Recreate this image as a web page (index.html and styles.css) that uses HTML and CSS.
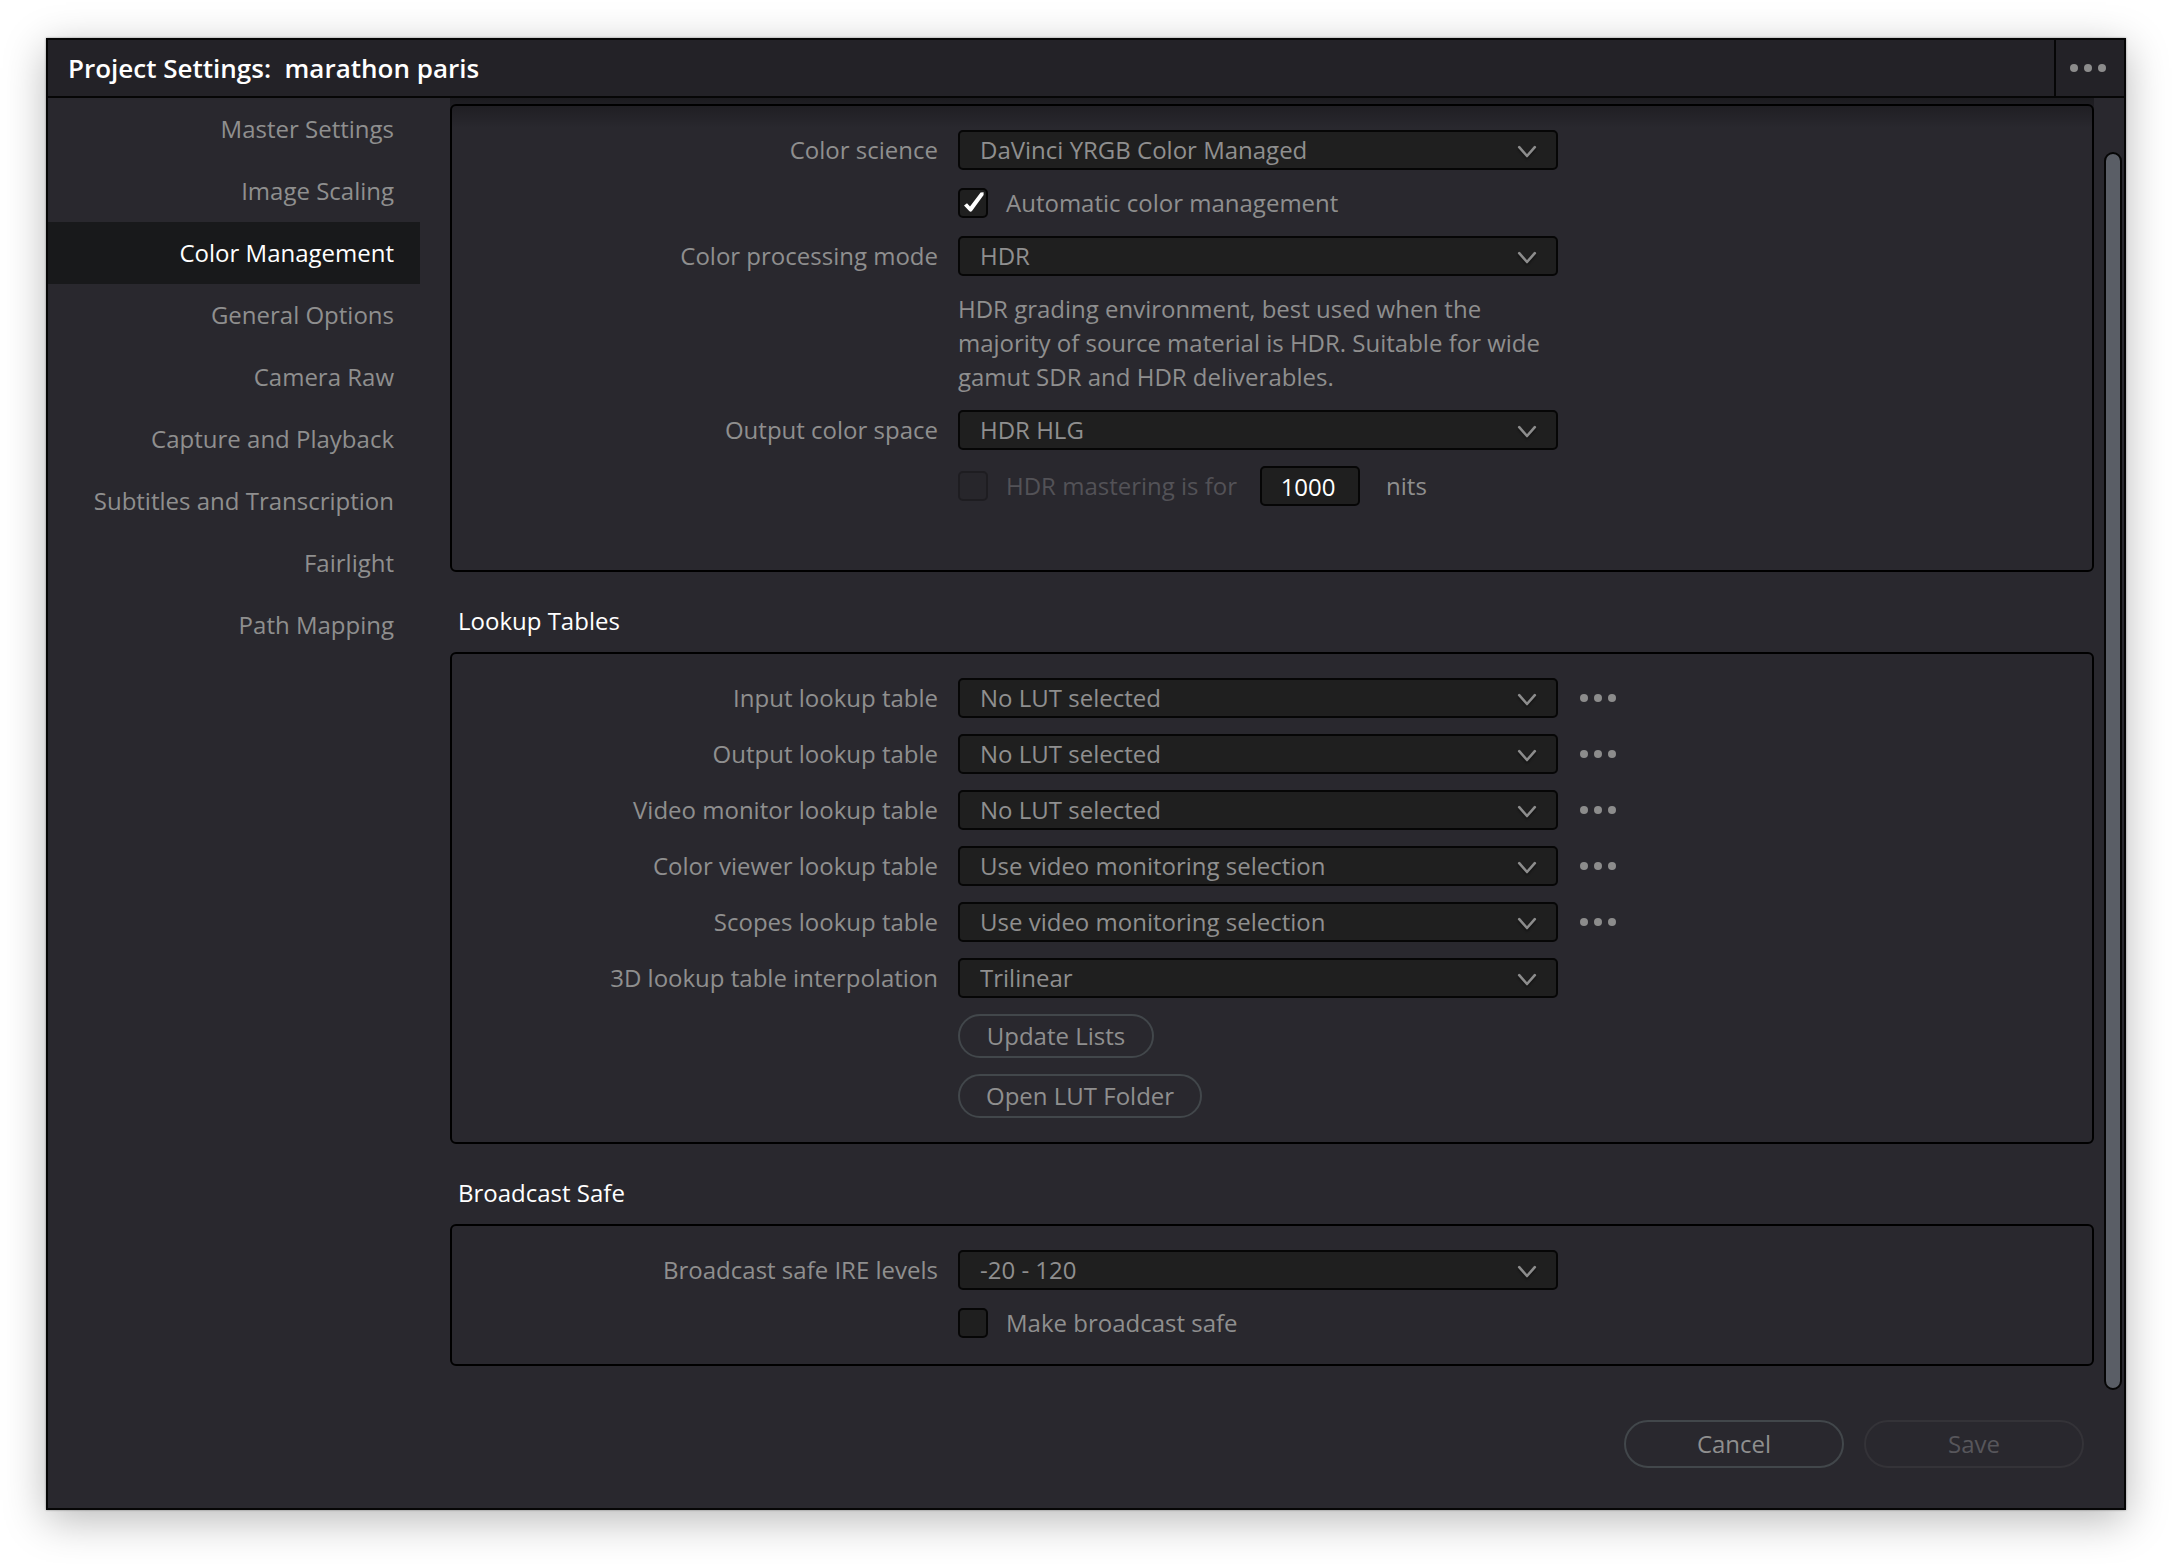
FILE: index.html
```html
<!DOCTYPE html>
<html lang="en">
<head>
    <meta charset="UTF-8">
    <meta name="viewport" content="width=device-width, initial-scale=1.0">
    <title>Project Settings</title>
    <link rel="stylesheet" href="styles.css">
</head>
<body>
    <!-- shared icons -->
    <svg class="sprite" aria-hidden="true">
        <symbol id="dots" viewBox="0 0 36 8">
            <circle cx="4" cy="4" r="4"/>
            <circle cx="18" cy="4" r="4"/>
            <circle cx="32" cy="4" r="4"/>
        </symbol>
        <symbol id="chevron" viewBox="0 0 20 14">
            <path d="M2.2 2.2 L10 11 L17.8 2.2" fill="none" stroke="currentColor" stroke-width="2.6" stroke-linecap="round" stroke-linejoin="round"/>
        </symbol>
        <symbol id="check" viewBox="0 0 30 30">
            <path d="M6 17.4 L9 15.2 L12 18.4 L22.6 4.6 L25.6 4.2 L25.6 7 L14 23 Q12.6 24.6 11.2 23 Z" fill="#fff"/>
        </symbol>
    </svg>

    <div class="window">
        <header class="titlebar">
            <h1>Project Settings:&nbsp; marathon paris</h1>
            <button class="titlebar-menu" aria-label="More options"><svg class="dots"><use href="#dots"/></svg></button>
        </header>

        <div class="main">
            <nav class="sidebar">
                <a href="#">Master Settings</a>
                <a href="#">Image Scaling</a>
                <a href="#" class="active">Color Management</a>
                <a href="#">General Options</a>
                <a href="#">Camera Raw</a>
                <a href="#">Capture and Playback</a>
                <a href="#">Subtitles and Transcription</a>
                <a href="#">Fairlight</a>
                <a href="#">Path Mapping</a>
            </nav>

            <div class="content">
                <section class="panel panel-color">
                    <div class="row">
                        <label class="name" for="science">Color science</label>
                        <div class="select">
                            <select id="science"><option>DaVinci YRGB Color Managed</option></select>
                            <svg class="chevron"><use href="#chevron"/></svg>
                        </div>
                    </div>
                    <div class="row row-check">
                        <label class="check">
                            <span class="box"><input type="checkbox" checked><svg><use href="#check"/></svg></span>
                            Automatic color management
                        </label>
                    </div>
                    <div class="row">
                        <label class="name" for="mode">Color processing mode</label>
                        <div class="select">
                            <select id="mode"><option>HDR</option></select>
                            <svg class="chevron"><use href="#chevron"/></svg>
                        </div>
                    </div>
                    <div class="row">
                        <p class="hint">HDR grading environment, best used when the majority of source material is HDR. Suitable for wide gamut SDR and HDR deliverables.</p>
                    </div>
                    <div class="row">
                        <label class="name" for="output">Output color space</label>
                        <div class="select">
                            <select id="output"><option>HDR HLG</option></select>
                            <svg class="chevron"><use href="#chevron"/></svg>
                        </div>
                    </div>
                    <div class="row">
                        <div class="mastering">
                            <label class="check disabled">
                                <span class="box"><input type="checkbox" disabled></span>
                                HDR mastering is for
                            </label>
                            <input class="number" id="nits" type="text" value="1000">
                            <label for="nits">nits</label>
                        </div>
                    </div>
                </section>

                <h2>Lookup Tables</h2>
                <section class="panel">
                    <div class="row">
                        <label class="name" for="lut-input">Input lookup table</label>
                        <div class="select">
                            <select id="lut-input"><option>No LUT selected</option></select>
                            <svg class="chevron"><use href="#chevron"/></svg>
                        </div>
                        <button class="more" aria-label="Input lookup table options"><svg class="dots"><use href="#dots"/></svg></button>
                    </div>
                    <div class="row">
                        <label class="name" for="lut-output">Output lookup table</label>
                        <div class="select">
                            <select id="lut-output"><option>No LUT selected</option></select>
                            <svg class="chevron"><use href="#chevron"/></svg>
                        </div>
                        <button class="more" aria-label="Output lookup table options"><svg class="dots"><use href="#dots"/></svg></button>
                    </div>
                    <div class="row">
                        <label class="name" for="lut-video">Video monitor lookup table</label>
                        <div class="select">
                            <select id="lut-video"><option>No LUT selected</option></select>
                            <svg class="chevron"><use href="#chevron"/></svg>
                        </div>
                        <button class="more" aria-label="Video monitor lookup table options"><svg class="dots"><use href="#dots"/></svg></button>
                    </div>
                    <div class="row">
                        <label class="name" for="lut-viewer">Color viewer lookup table</label>
                        <div class="select">
                            <select id="lut-viewer"><option>Use video monitoring selection</option></select>
                            <svg class="chevron"><use href="#chevron"/></svg>
                        </div>
                        <button class="more" aria-label="Color viewer lookup table options"><svg class="dots"><use href="#dots"/></svg></button>
                    </div>
                    <div class="row">
                        <label class="name" for="lut-scopes">Scopes lookup table</label>
                        <div class="select">
                            <select id="lut-scopes"><option>Use video monitoring selection</option></select>
                            <svg class="chevron"><use href="#chevron"/></svg>
                        </div>
                        <button class="more" aria-label="Scopes lookup table options"><svg class="dots"><use href="#dots"/></svg></button>
                    </div>
                    <div class="row">
                        <label class="name" for="lut-3d">3D lookup table interpolation</label>
                        <div class="select">
                            <select id="lut-3d"><option>Trilinear</option></select>
                            <svg class="chevron"><use href="#chevron"/></svg>
                        </div>
                    </div>
                    <div class="row"><button class="pill">Update Lists</button></div>
                    <div class="row"><button class="pill">Open LUT Folder</button></div>
                </section>

                <h2>Broadcast Safe</h2>
                <section class="panel">
                    <div class="row">
                        <label class="name" for="ire">Broadcast safe IRE levels</label>
                        <div class="select">
                            <select id="ire"><option>-20 - 120</option></select>
                            <svg class="chevron"><use href="#chevron"/></svg>
                        </div>
                    </div>
                    <div class="row row-check">
                        <label class="check">
                            <span class="box"><input type="checkbox"><svg><use href="#check"/></svg></span>
                            Make broadcast safe
                        </label>
                    </div>
                </section>
            </div>

            <div class="scrollbar"><div class="thumb"></div></div>
        </div>

        <footer class="footer">
            <button class="pill pill-large">Cancel</button>
            <button class="pill pill-large" disabled>Save</button>
        </footer>
    </div>
</body>
</html>
```

FILE: styles.css
```css
* {
    box-sizing: border-box;
}

body {
    margin: 0;
    min-height: 100vh;
    padding: 38px 46px 54px;
    display: flex;
    background-color: #fff;
    color: #8f8f8f;
    font-family: "Open Sans", sans-serif;
    font-size: 24px;
    line-height: 34px;
}

button, select, input {
    font: inherit;
    color: inherit;
    margin: 0;
}

button {
    background: none;
    border: none;
    padding: 0;
    cursor: pointer;
}

.sprite {
    position: absolute;
    width: 0;
    height: 0;
}

.window {
    flex: 1;
    display: flex;
    flex-direction: column;
    background-color: #29282e;
    border: 2px solid #060606;
    box-shadow: 0 0 2px rgba(0, 0, 0, 0.4), 0 10px 40px rgba(0, 0, 0, 0.28);
}

/* title bar */
.titlebar {
    display: flex;
    height: 58px;
    background-color: #232227;
    border-bottom: 2px solid #060606;
}

.titlebar h1 {
    flex: 1;
    margin: 0;
    padding-left: 20px;
    color: #fff;
    font-size: 26px;
    font-weight: 600;
    line-height: 56px;
}

.titlebar-menu {
    width: 70px;
    padding-right: 4px;
    border-left: 2px solid #060606;
}

.dots {
    display: block;
    width: 36px;
    height: 8px;
    margin: 0 auto;
    fill: #8c8c8c;
}

.main {
    flex: 1;
    display: flex;
}

/* sidebar */
.sidebar {
    width: 372px;
    margin-right: 30px;
}

.sidebar a {
    display: block;
    padding-right: 26px;
    color: inherit;
    line-height: 62px;
    text-align: right;
    text-decoration: none;
}

.sidebar .active {
    background-color: #18191b;
    color: #fff;
}

/* settings */
.content {
    flex: 1;
    position: relative;
    padding-top: 6px;
}

.content::before {
    content: "";
    position: absolute;
    top: 0;
    left: 0;
    right: 0;
    height: 30px;
    background: linear-gradient(rgba(0, 0, 0, 0.32), rgba(0, 0, 0, 0));
    pointer-events: none;
}

.content h2 {
    margin: 0;
    padding: 32px 0 14px 8px;
    color: #fff;
    font-size: 24px;
    font-weight: 400;
    line-height: 34px;
}

.panel {
    display: flex;
    flex-direction: column;
    gap: 16px;
    padding: 24px 0;
    border: 2px solid #000;
    border-radius: 6px;
}

.panel-color {
    padding-bottom: 64px;
}

.row {
    display: grid;
    grid-template-columns: 486px 600px auto;
    column-gap: 20px;
    align-items: center;
    justify-content: start;
}

.row > * {
    grid-column: 2;
}

.row .name {
    grid-column: 1;
    text-align: right;
}

.row .more {
    grid-column: 3;
    width: 40px;
    height: 40px;
}

.row-check {
    margin: 2px 0;
}

.select {
    position: relative;
    height: 40px;
}

.select select {
    appearance: none;
    display: block;
    width: 100%;
    height: 40px;
    padding: 0 60px 0 20px;
    background-color: #1f1f1f;
    border: 2px solid #060606;
    border-radius: 5px;
}

.chevron {
    position: absolute;
    right: 21px;
    top: 15px;
    width: 20px;
    height: 14px;
    color: #8c8c8c;
    filter: drop-shadow(0 2px 1px rgba(0, 0, 0, 0.4));
    pointer-events: none;
}

.hint {
    margin: 0;
}

.check {
    display: flex;
    align-items: center;
    gap: 18px;
    height: 30px;
}

.box {
    position: relative;
    width: 30px;
    height: 30px;
}

.box input {
    appearance: none;
    display: block;
    width: 30px;
    height: 30px;
    background-color: #1f1f1f;
    border: 2px solid #060606;
    border-radius: 5px;
}

.box svg {
    display: none;
    position: absolute;
    inset: 0;
    width: 30px;
    height: 30px;
    pointer-events: none;
}

.box input:checked + svg {
    display: block;
}

.disabled {
    color: #535257;
}

.disabled input {
    background-color: #27262b;
    border-color: #1e1d21;
}

.mastering {
    display: flex;
    align-items: center;
}

.number {
    width: 100px;
    height: 40px;
    margin: 0 26px 0 23px;
    padding: 0 14px 0 10px;
    background-color: #1f1f1f;
    border: 2px solid #060606;
    border-radius: 5px;
    color: #fff;
    text-align: center;
}

.pill {
    justify-self: start;
    min-width: 196px;
    height: 44px;
    padding: 0 26px;
    border: 2px solid #42474b;
    border-radius: 24px;
}

.pill:disabled {
    border-color: #343338;
    color: #57565b;
}

.pill-large {
    width: 220px;
    height: 48px;
}

.scrollbar {
    display: flex;
    width: 30px;
    padding: 54px 2px 0 10px;
}

.thumb {
    flex: 1;
    background-color: #5a5e66;
    border: 2px solid #060606;
    border-radius: 9px;
}

.footer {
    display: flex;
    justify-content: flex-end;
    gap: 20px;
    padding: 30px 40px 40px;
}
```
